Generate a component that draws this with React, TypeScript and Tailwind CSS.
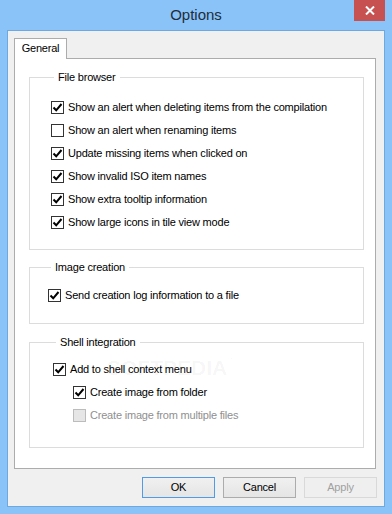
import React from "react";

function Check({ checked, disabled }: { checked?: boolean; disabled?: boolean }) {
  return (
    <span
      className={
        disabled
          ? "flex h-[13px] w-[13px] shrink-0 items-center justify-center border border-[#bcbcbc] bg-[#e6e6e6]"
          : "flex h-[13px] w-[13px] shrink-0 items-center justify-center border border-[#333333] bg-white"
      }
    >
      {checked && (
        <svg width="11" height="11" viewBox="0 0 11 11">
          <path d="M1.5 5.5 L4.2 8.3 L9.5 2" stroke="#000" strokeWidth="2" fill="none" />
        </svg>
      )}
    </span>
  );
}

function Row({ label, checked, disabled }: { label: string; checked?: boolean; disabled?: boolean }) {
  return (
    <div className="flex h-[23px] items-center gap-[4px]">
      <Check checked={checked} disabled={disabled} />
      <span className={disabled ? "text-[#8f8f8f]" : "text-black"}>{label}</span>
    </div>
  );
}

function Group({ title, className, children }: { title: string; className: string; children: React.ReactNode }) {
  return (
    <fieldset className={`ml-[14px] w-[335px] border border-[#dcdcdc] ${className}`}>
      <legend className="ml-[3px] px-[4px] leading-[15px]">{title}</legend>
      {children}
    </fieldset>
  );
}

export default function App() {
  return (
    <div
      className="flex h-[514px] w-[392px] flex-col bg-[#89c3f7] text-[11px] tracking-[-0.2px]"
      style={{ fontFamily: '"Liberation Sans", Arial, sans-serif' }}
    >
      {/* title bar */}
      <div className="flex h-[30px] items-start">
        <div className="ml-[7px] w-[31px]" />
        <div className="flex-1 pt-[5px] text-center text-[15px] leading-[20px] tracking-normal text-[#1f2d3d]">
          Options
        </div>
        <div className="mr-[7px] flex h-[21px] w-[31px] items-center justify-center bg-[#c75050]">
          <svg width="10" height="9" viewBox="0 0 10 9">
            <path d="M1 0.5 L9 8.5 M9 0.5 L1 8.5" stroke="#fff" strokeWidth="2" />
          </svg>
        </div>
      </div>

      {/* client area */}
      <div className="mx-[7px] flex h-[477px] flex-col border border-[#6ea8de] bg-[#f0f0f0] pl-[6px] pt-[7px]">
        <div className="relative z-10 -mb-px flex h-[21px] w-[53px] items-center justify-center border-x border-t border-[#acacac] bg-white pb-[2px]">
          General
        </div>

        <div className="relative flex h-[411px] w-[362px] flex-col border border-[#acacac] bg-white">
          {/* watermark, behind the groups */}
          <div className="pointer-events-none absolute left-[92px] top-[298px] flex items-start text-[#000]/[0.045]">
            <span className="text-[21px] font-bold leading-none tracking-normal">SOFTPEDIA</span>
            <span className="text-[8px] leading-none">™</span>
          </div>

          <Group title="File browser" className="mt-[11px] pb-[15px] pl-[21px] pt-[11px]">
            <Row label="Show an alert when deleting items from the compilation" checked />
            <Row label="Show an alert when renaming items" />
            <Row label="Update missing items when clicked on" checked />
            <Row label="Show invalid ISO item names" checked />
            <Row label="Show extra tooltip information" checked />
            <Row label="Show large icons in tile view mode" checked />
          </Group>

          <Group title="Image creation" className="mt-[10px] pb-[16px] pl-[18px] pt-[9px]">
            <Row label="Send creation log information to a file" checked />
          </Group>

          <Group title="Shell integration" className="mt-[11px] pb-[20px] pl-[23px] pt-[8px]">
            <Row label="Add to shell context menu" checked />
            <div className="pl-[20px]">
              <Row label="Create image from folder" checked />
              <Row label="Create image from multiple files" disabled />
            </div>
          </Group>
        </div>

        <div className="mt-[8px] flex gap-[8px] pl-[128px]">
          <button className="h-[21px] w-[73px] border border-[#4f9be6] bg-gradient-to-b from-[#f0f0f0] to-[#e5e5e5] text-black">
            OK
          </button>
          <button className="h-[21px] w-[73px] border border-[#acacac] bg-gradient-to-b from-[#f0f0f0] to-[#e5e5e5] text-black">
            Cancel
          </button>
          <button className="h-[21px] w-[73px] border border-[#d9d9d9] bg-[#efefef] text-[#a0a0a0]">
            Apply
          </button>
        </div>
      </div>
    </div>
  );
}
